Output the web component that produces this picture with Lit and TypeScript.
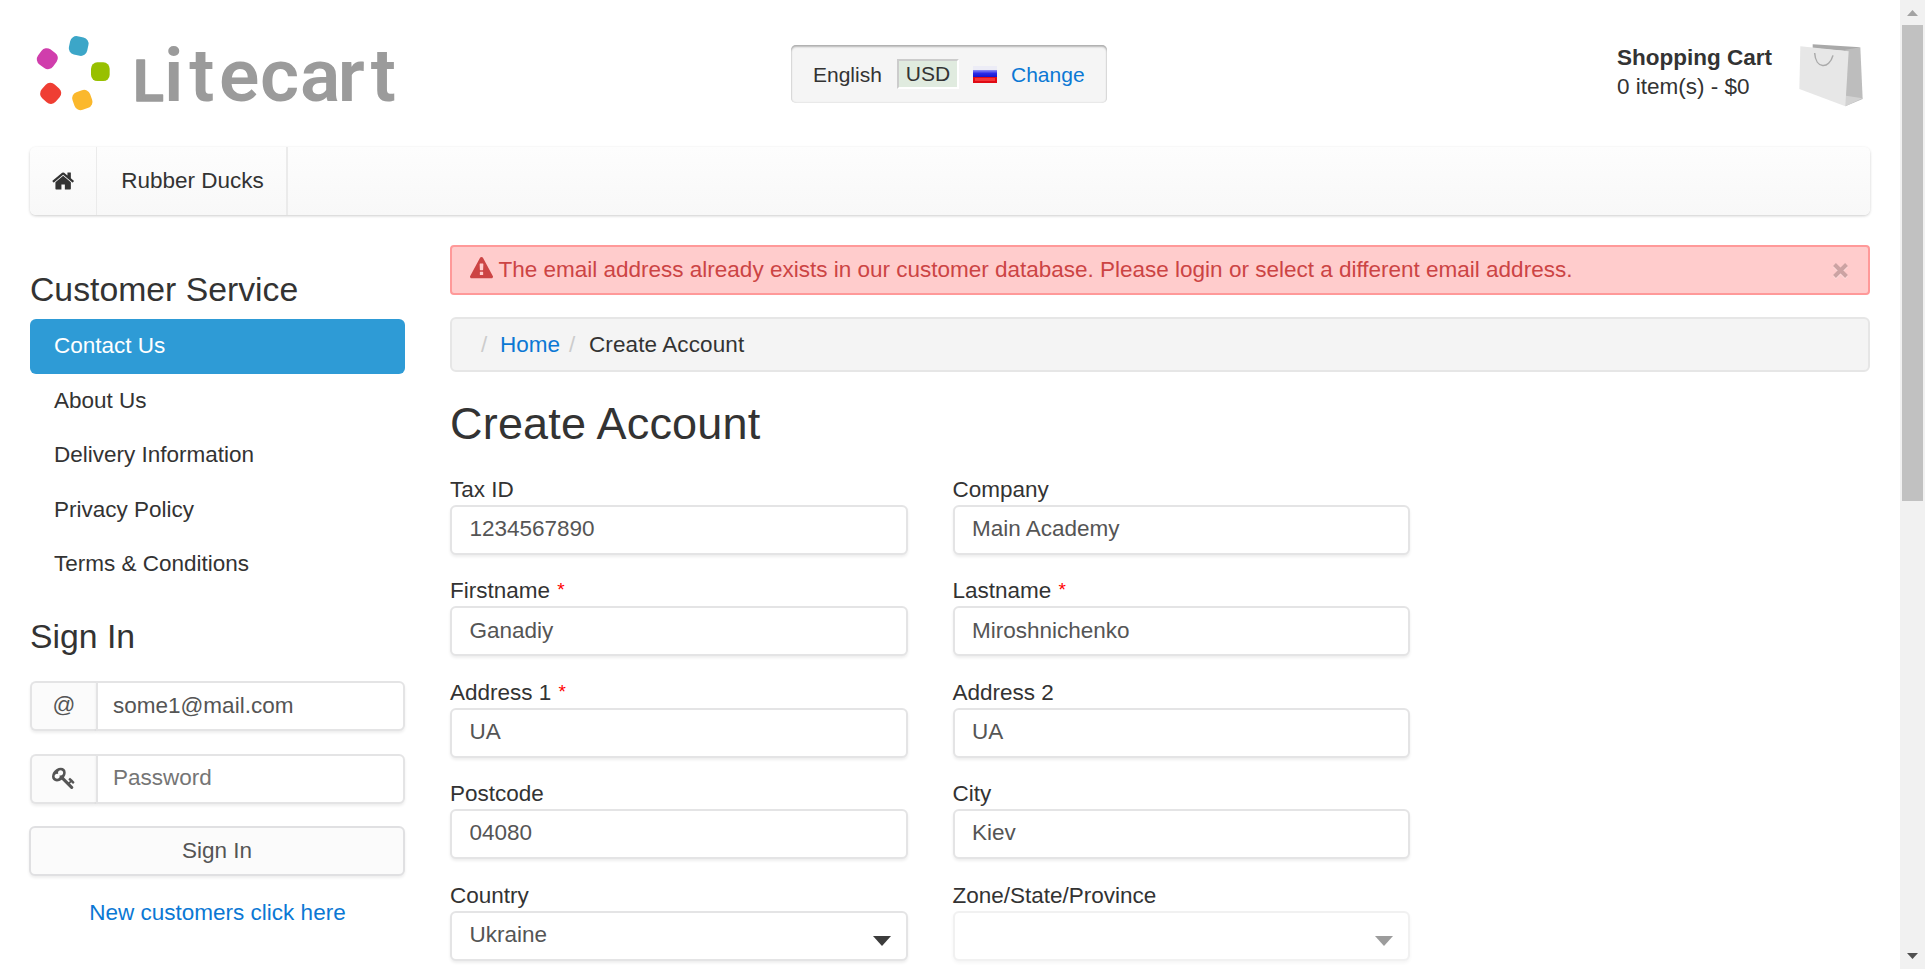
import { LitElement, html, css, svg, nothing } from "lit";
import { customElement } from "lit/decorators.js";

interface Field {
  label: string;
  value: string;
  required?: boolean;
  kind?: "select";
  disabled?: boolean;
}

const FIELDS: Field[] = [
  { label: "Tax ID", value: "1234567890" },
  { label: "Company", value: "Main Academy" },
  { label: "Firstname", value: "Ganadiy", required: true },
  { label: "Lastname", value: "Miroshnichenko", required: true },
  { label: "Address 1", value: "UA", required: true },
  { label: "Address 2", value: "UA" },
  { label: "Postcode", value: "04080" },
  { label: "City", value: "Kiev" },
  { label: "Country", value: "Ukraine", kind: "select" },
  { label: "Zone/State/Province", value: "", kind: "select", disabled: true },
];

const SERVICE_LINKS = ["Contact Us", "About Us", "Delivery Information", "Privacy Policy", "Terms & Conditions"];

const HOME =
  "M1408 992v480q0 26-19 45t-45 19h-384v-384h-256v384h-384q-26 0-45-19t-19-45v-480q0-1 .5-3t.5-3l575-474 575 474q1 2 1 6zm223-69l-62 74q-8 9-21 11h-3q-13 0-21-7l-692-577-692 577q-12 8-24 7-13-2-21-11l-62-74q-8-10-7-23.5t11-21.5l719-599q32-26 76-26t76 26l244 204v-195q0-14 9-23t23-9h192q14 0 23 9t9 23v408l219 182q10 8 11 21.5t-7 23.5z";
const KEY =
  "M832 512q0-80-56-136t-136-56-136 56-56 136q0 42 19 83-41-19-83-19-80 0-136 56t-56 136 56 136 136 56 136-56 56-136q0-42-19-83 41 19 83 19 80 0 136-56t56-136zm851 704q0 17-49 66t-66 49q-9 0-28.5-16t-36.5-33-38.5-40-24.5-26l-96 96 220 220q28 28 28 68 0 42-39 81t-81 39q-40 0-68-28l-671-671q-176 131-365 131-163 0-265.5-102.5t-102.5-265.5q0-160 95-313t248-248 313-95q163 0 265.5 102.5t102.5 265.5q0 189-131 365l355 355 96-96q-3-3-26-24.5t-40-38.5-33-36.5-16-28.5q0-17 49-66t66-49q13 0 23 10 6 6 46 44.5t82 79.5 86.5 86 73 78 28.5 41z";
const WARNING =
  "M1024 1375v-190q0-14-9.5-23.5t-22.5-9.5h-192q-13 0-22.5 9.5t-9.5 23.5v190q0 14 9.5 23.5t22.5 9.5h192q13 0 22.5-9.5t9.5-23.5zm-2-374l18-459q0-12-10-19-13-11-24-11h-220q-11 0-24 11-10 7-10 21l17 457q0 10 10 16.5t24 6.5h185q14 0 23.5-6.5t10.5-16.5zm-14-934l768 1408q35 63-2 126-17 29-46.5 46t-63.5 17h-1536q-34 0-63.5-17t-46.5-46q-37-63-2-126l768-1408q17-31 47-49t65-18 65 18 47 49z";

const DOTS = [
  { x: 236, y: 139, turn: 12, fill: "#3ca6c8" },
  { x: 301, y: 216, turn: 0, fill: "#98c000" },
  { x: 247, y: 301, turn: -20, fill: "#fbb82c" },
  { x: 152, y: 281, turn: 42, fill: "#ef3e33" },
  { x: 142, y: 177, turn: 36, fill: "#d03eac" },
];

@customElement("app-root")
export class AppRoot extends LitElement {
  static styles = css`
    :host {
      display: flex;
      height: 969px;
      overflow: hidden;
      background: #fff;
      color: #333;
      font-family: "Liberation Sans", Arial, sans-serif;
      font-size: 22.5px;
      line-height: 30px;
    }
    * { box-sizing: border-box; }
    svg { display: block; flex: none; }
    a { color: #0b78d4; text-decoration: none; }
    h1, h3 { margin: 0; font-weight: 400; }
    .page { flex: 1; min-width: 0; padding: 0 30px; }

    .header { display: grid; grid-template-columns: 1fr auto 1fr; height: 147px; }
    .logo { width: 370px; height: 120px; margin-top: 13px; overflow: visible; }
    .wordmark { font-family: Roboto, sans-serif; font-weight: 600; font-size: 225px; fill: #9b9b9b; }
    .wordmark-initial { font-size: 171px; stroke: #9b9b9b; stroke-width: 4px; stroke-linejoin: round; }
    .region {
      display: flex; align-items: center; margin: 45px 2px 0 0; width: 316px; height: 58px; padding: 1px 20px 0 22px;
      font-size: 21px; background: #f5f5f5; border-radius: 5px;
      box-shadow: inset 0 2px 2px rgba(0, 0, 0, .25), inset 0 0 2px rgba(0, 0, 0, .18);
    }
    .currency {
      width: 62px; height: 30px; margin: -2px 14px 0 14px; line-height: 26px; text-align: center;
      background: #e0ebdf; border: 2px solid; border-color: #ccc #fff #fff #ccc;
    }
    .region .lang { width: 70px; }
    .region a { margin-left: 14px; }
    .cart { display: flex; justify-content: flex-end; padding-top: 43px; }
    .cart-text { line-height: 29px; width: 180px; }
    .bag { width: 68px; height: 67px; margin: -1px 5px 0 0; }

    .nav {
      display: flex; height: 68px; border-radius: 6px; background: linear-gradient(#fdfdfd, #f8f8f8);
      box-shadow: 0 1px 3px rgba(0, 0, 0, .2);
    }
    .nav-item { display: flex; align-items: center; justify-content: center; border-right: 2px solid #ebebeb; padding-bottom: 1px; }
    .nav-home { width: 67px; border-right-width: 1px; padding-left: 2px; }
    .nav-ducks { width: 191px; padding-left: 2px; }

    .columns { display: grid; grid-template-columns: 375px 1fr; gap: 45px; }
    .side { padding-top: 54px; }
    .side h3 { font-size: 33.75px; line-height: 40px; }
    .menu { margin: 10px 0 24px; padding: 0; list-style: none; }
    .menu li { height: 54.6px; padding: 0 24px; line-height: 54.6px; }
    .menu .active { background: #2e9bd6; color: #fff; border-radius: 6px; }

    .control {
      display: block; width: 100%; height: 50px; padding: 0 17.5px 1.5px; outline: 0; margin: 0;
      border: 2px solid #e4e4e5; border-radius: 6px; background: #fff; color: #555; opacity: 1;
      font: inherit; box-shadow: 0 2px 3px rgba(0, 0, 0, .07); appearance: none;
    }
    .control::placeholder { color: #757575; opacity: 1; }
    .group { display: flex; margin-bottom: 22.5px; }
    .group .control { flex: 1; min-width: 0; border-radius: 0 6px 6px 0; padding-left: 15px; }
    .addon {
      display: flex; align-items: center; justify-content: center; width: 66px; height: 50px; padding-bottom: 2px;
      color: #555; background: #fbfbfb; border: 2px solid #e4e4e5; border-right: 0; border-radius: 6px 0 0 6px;
      box-shadow: 0 2px 3px rgba(0, 0, 0, .07);
    }
    .group:first-of-type { margin-top: 25.3px; }
    button.control { width: 376px; margin-left: -1px; background: #fbfbfb; border-color: #e0e0e2; }
    .new { display: block; margin-top: 21.5px; text-align: center; }

    .main { padding-top: 30px; min-width: 0; }
    .alert {
      display: flex; align-items: center; height: 50px; padding: 0 19px 0 17.5px; color: #c44;
      background: #fcc; border: 2px solid #f99; border-radius: 4px;
    }
    .alert-icon { margin-top: -3px; }
    .alert-text { flex: 1; margin-left: 6px; white-space: nowrap; }
    .crumbs {
      display: flex; align-items: center; height: 55px; margin-top: 22px; padding-left: 29px;
      background: #f4f4f4; border: 2px solid #e6e6e6; border-radius: 6px;
    }
    .slash { color: #ccc; width: 19px; }
    .crumbs a { width: 69px; }
    .crumbs .current { margin-left: 1px; letter-spacing: .1px; }
    .title { margin: 27px 0 26px; font-size: 45px; line-height: 50px; letter-spacing: .2px; }
    .form { display: grid; grid-template-columns: 457.5px 457.5px; column-gap: 45px; row-gap: 21.4px; }
    .label { height: 30px; display: block; }
    .star { color: #f00; font-size: 19px; line-height: 20px; margin-left: 1px; vertical-align: 2px; }
    .select { display: grid; align-items: center; }
    .select > * { grid-area: 1 / 1; }
    .arrow { justify-self: end; margin: 10px 17px 0 0; }
    .disabled { opacity: .5; }

    .scroll {
      display: flex; flex-direction: column; align-items: center; width: 25px; background: #f1f1f1;
      padding: 10px 0;
    }
    .thumb { width: 21px; height: 476px; margin: 9px 0 auto; background: #c1c1c1; }
  `;

  private icon(path: string, size: number, cls = "") {
    return html`<svg class=${cls} width=${size} height=${size} viewBox="0 0 1792 1792" fill="currentColor"><path d=${path}></path></svg>`;
  }

  private field(f: Field) {
    return html`<label>
      <span class="label">${f.label}${f.required ? html` <span class="star">*</span>` : nothing}</span>
      ${f.kind === "select"
        ? html`<span class="select ${f.disabled ? "disabled" : ""}">
            <select class="control" ?disabled=${f.disabled}><option>${f.value}</option></select>
            <svg class="arrow" width="18" height="10" viewBox="0 0 18 10" fill="#3c3c3c"><path d="M0 0h18L9 10z"></path></svg>
          </span>`
        : html`<input class="control" .value=${f.value} />`}
    </label>`;
  }

  render() {
    return html`
      <div class="page">
        <header class="header">
          <svg class="logo" viewBox="90 40 1110 360">
            ${DOTS.map(
              (d) => svg`<rect x=${d.x - 28} y=${d.y - 28} width="56" height="56" rx="19" fill=${d.fill}
                transform="rotate(${d.turn} ${d.x} ${d.y})"></rect>`
            )}
            <text class="wordmark" y="303"><tspan class="wordmark-initial" x="399">L</tspan><tspan x="492 568 657 780 900 1013 1112">itecart</tspan></text>
          </svg>
          <div class="region">
            <span class="lang">English</span>
            <span class="currency">USD</span>
            <svg width="24" height="17" viewBox="0 0 24 17">
              <defs>
                <linearGradient id="blue" x2="0" y2="1"><stop stop-color="#8f8ff5"></stop><stop offset=".45" stop-color="#2a2ae8"></stop><stop offset="1" stop-color="#1212c8"></stop></linearGradient>
              </defs>
              <rect width="24" height="6" fill="#ececf6"></rect>
              <rect y="4" width="24" height="7.5" fill="url(#blue)"></rect>
              <rect y="11" width="24" height="6" fill="#e00a14"></rect>
              <rect x="2" y="12" width="20" height="3" fill="#f43438"></rect>
            </svg>
            <a>Change</a>
          </div>
          <div class="cart">
            <div class="cart-text"><strong>Shopping Cart</strong><br />0 item(s) - $0</div>
            <svg class="bag" viewBox="650 125 204 201">
              <path d="M697 132 840 141 805 153 697 144z" fill="#a9a9a9"></path>
              <path d="M795 148 840 141 847 296 795 318z" fill="#bdbdbd"></path>
              <path d="M797 286 846 294 795 318z" fill="#d2d2d2"></path>
              <path d="M660 138 805 153 795 318 657 266z" fill="#e7e7e7"></path>
              <path d="M703 158C706 206 746 208 758 165" fill="none" stroke="#aaa" stroke-width="4.5"></path>
            </svg>
          </div>
        </header>
        <nav class="nav">
          <span class="nav-item nav-home">${this.icon(HOME, 24)}</span>
          <span class="nav-item nav-ducks">Rubber Ducks</span>
        </nav>
        <div class="columns">
          <aside class="side">
            <h3>Customer Service</h3>
            <ul class="menu">
              ${SERVICE_LINKS.map((t, i) => html`<li class=${i === 0 ? "active" : ""}>${t}</li>`)}
            </ul>
            <h3>Sign In</h3>
            <div class="group"><span class="addon">@</span><input class="control" value="some1@mail.com" /></div>
            <div class="group"><span class="addon">${this.icon(KEY, 24)}</span><input class="control" type="password" placeholder="Password" /></div>
            <button class="control">Sign In</button>
            <a class="new">New customers click here</a>
          </aside>
          <main class="main">
            <div class="alert">
              ${this.icon(WARNING, 23, "alert-icon")}
              <span class="alert-text">The email address already exists in our customer database. Please login or select a different email address.</span>
              <svg width="17" height="17" viewBox="0 0 17 17"><path d="M2.5 3.5l12 12m0-12l-12 12" stroke="#ffe0e0" stroke-width="4"></path><path d="M2.500 2.500l12 12m0-12l-12 12" stroke="#cca3a3" stroke-width="4"></path></svg>
            </div>
            <div class="crumbs"><span class="slash">/</span><a>Home</a><span class="slash">/</span><span class="current">Create Account</span></div>
            <h1 class="title">Create Account</h1>
            <div class="form">${FIELDS.map((f) => this.field(f))}</div>
          </main>
        </div>
      </div>
      <div class="scroll">
        <svg width="11" height="6" viewBox="0 0 11 6"><path d="M0 6h11L5.500 0z" fill="#a3a3a3"></path></svg>
        <div class="thumb"></div>
        <svg width="11" height="6" viewBox="0 0 11 6"><path d="M0 0h11L5.500 6z" fill="#505050"></path></svg>
      </div>
    `;
  }
}
